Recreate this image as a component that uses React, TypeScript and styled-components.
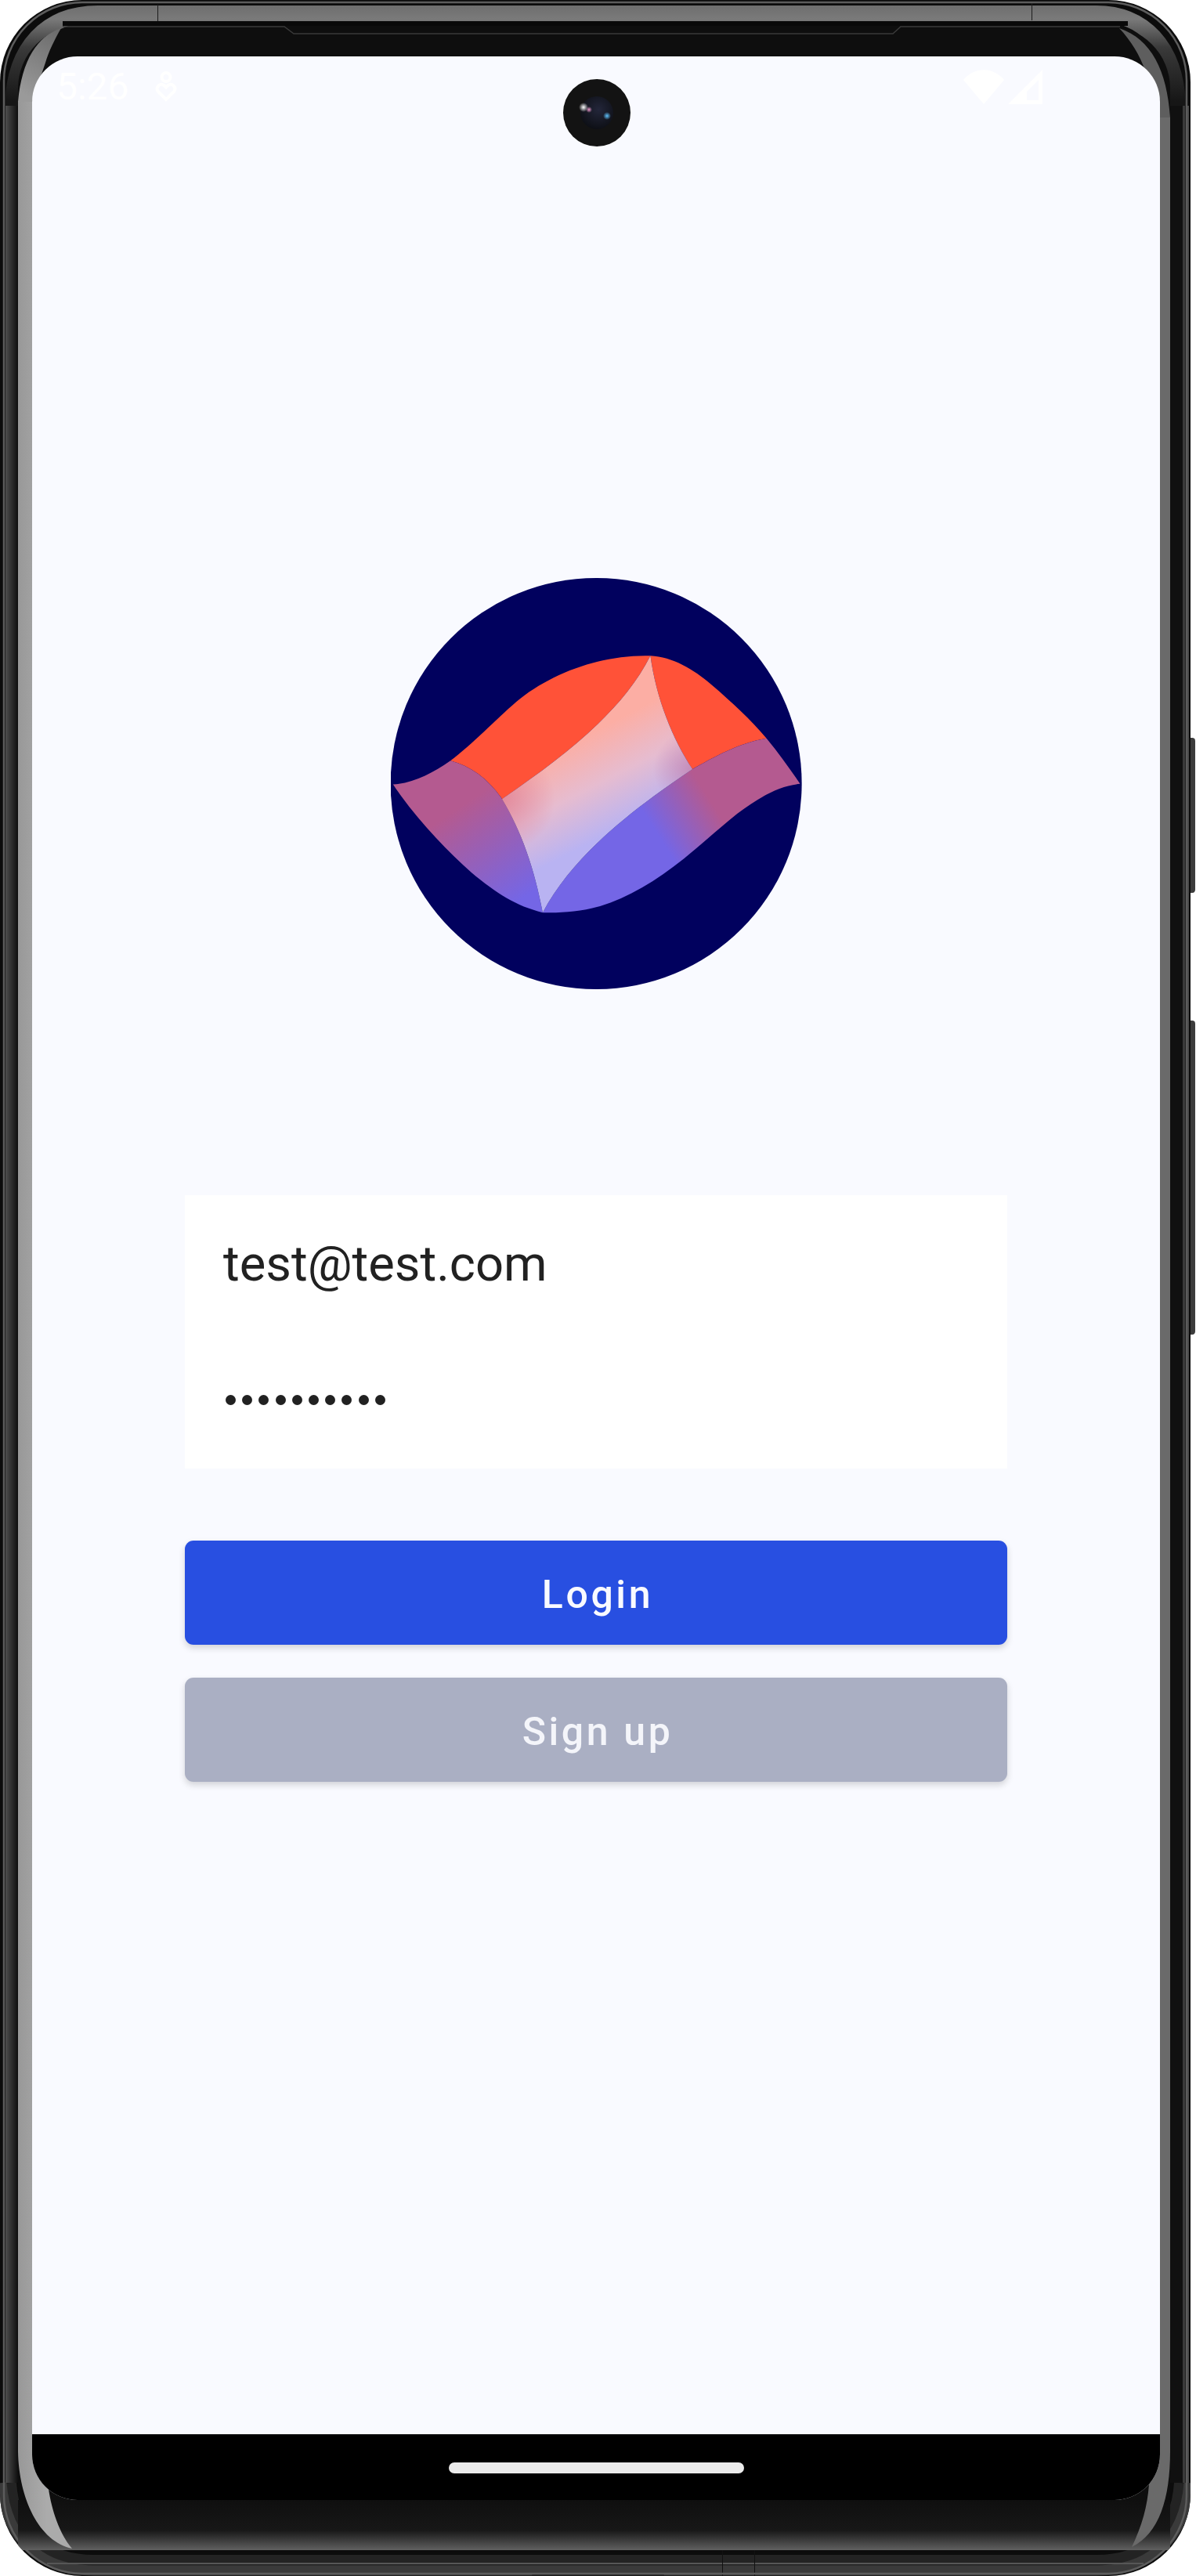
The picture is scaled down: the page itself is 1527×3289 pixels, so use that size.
import { createGlobalStyle, styled } from "styled-components";

const GlobalStyle = createGlobalStyle`
  html, body {
    margin: 0;
    padding: 0;
    background: #ffffff;
  }
`;

const Device = styled.div`
  position: relative;
  box-sizing: border-box;
  width: 1527px;
  height: 3289px;
  padding: 72px 46px 97px 41px;
  overflow: hidden;
  font-family: Roboto, "Liberation Sans", sans-serif;
`;

const FrameArt = styled.svg`
  position: absolute;
  top: 0;
  left: 0;
`;

const Screen = styled.div`
  position: relative;
  display: flex;
  flex-direction: column;
  height: 100%;
  border-radius: 58px;
  overflow: hidden;
  background: #f9faff;
`;

const StatusBar = styled.div`
  display: flex;
  align-items: center;
  justify-content: space-between;
  flex: none;
  height: 78px;
  padding: 0 150px 0 31px;
  color: #ffffff;
`;

const StatusGroup = styled.div`
  display: flex;
  align-items: center;
  gap: ${(props: { $gap: number }) => props.$gap}px;
`;

const Clock = styled.span`
  font-size: 48px;
  line-height: 56px;
`;

const Camera = styled.div`
  position: absolute;
  top: 29px;
  left: 678px;
  width: 86px;
  height: 86px;
`;

const Content = styled.main`
  display: flex;
  flex-direction: column;
  align-items: center;
  flex: 1;
  padding-top: 588px;
`;

const Logo = styled.svg`
  display: block;
  width: 525px;
  height: 525px;
`;

const Form = styled.form`
  display: flex;
  flex-direction: column;
  width: 1050px;
  margin-top: 263px;
`;

const Fields = styled.div`
  display: flex;
  flex-direction: column;
  background: #ffffff;
`;

const Field = styled.div`
  display: flex;
  align-items: center;
  box-sizing: border-box;
  height: 174.5px;
  padding: 0 49px;
  color: #212121;
  font-size: 63.3px;
`;

const Dots = styled.div`
  display: flex;
  gap: 8.2px;
  padding-left: 3px;
`;

const Dot = styled.span`
  width: 13px;
  height: 13px;
  border-radius: 50%;
  background: #212121;
`;

const Button = styled.button<{ $muted?: boolean }>`
  display: block;
  width: 100%;
  height: 133px;
  margin-top: ${(props) => (props.$muted ? "42px" : "92px")};
  padding: 4px 0 0 4px;
  border: 0;
  border-radius: 11px;
  background: ${(props) => (props.$muted ? "#aaafc3" : "#284fe1")};
  box-shadow: 0 4px 8px rgba(0, 0, 0, 0.16);
  color: ${(props) => (props.$muted ? "#f4f5fa" : "#f9faff")};
  font-family: inherit;
  font-size: 50px;
  font-weight: 500;
  letter-spacing: 3.6px;
`;

const NavBar = styled.div`
  display: flex;
  align-items: center;
  justify-content: center;
  flex: none;
  height: 84px;
  background: #000000;
`;

const NavPill = styled.div`
  width: 377px;
  height: 14px;
  margin-top: 1px;
  border-radius: 7px;
  background: #ebebeb;
`;

const PhoneFrame = () => (
  <FrameArt width="1527" height="3289" viewBox="0 0 1527 3289">
    <defs>
      <linearGradient id="band" x1="0" y1="4" x2="0" y2="130" gradientUnits="userSpaceOnUse">
        <stop offset="0" stopColor="#6c6c6c" />
        <stop offset="0.16" stopColor="#7a7a7a" />
        <stop offset="0.45" stopColor="#3a3a3a" />
        <stop offset="1" stopColor="#161616" />
      </linearGradient>
      <linearGradient id="chin" x1="0" y1="3192" x2="0" y2="3256" gradientUnits="userSpaceOnUse">
        <stop offset="0" stopColor="#0f0f0f" />
        <stop offset="0.6" stopColor="#171717" />
        <stop offset="1" stopColor="#606060" />
      </linearGradient>
      <linearGradient id="railLeft" x1="7" y1="0" x2="23" y2="0" gradientUnits="userSpaceOnUse">
        <stop offset="0" stopColor="#4e4e4e" />
        <stop offset="1" stopColor="#0e0e0e" />
      </linearGradient>
      <linearGradient id="wedgeLeft" x1="23" y1="0" x2="60" y2="0" gradientUnits="userSpaceOnUse">
        <stop offset="0" stopColor="#989898" />
        <stop offset="1" stopColor="#ababab" />
      </linearGradient>
      <linearGradient id="wedgeTop" x1="30" y1="120" x2="75" y2="40" gradientUnits="userSpaceOnUse">
        <stop offset="0" stopColor="#9a9a9a" />
        <stop offset="1" stopColor="#6c6c6c" />
      </linearGradient>
      <clipPath id="shell">
        <rect x="0" y="0" width="1520" height="3289" rx="105" />
      </clipPath>
    </defs>

    {/* side keys */}
    <rect x="1512" y="942" width="14" height="198" rx="4" fill="#3c3c3c" />
    <rect x="1512" y="1303" width="14" height="401" rx="4" fill="#3c3c3c" />

    <g clipPath="url(#shell)">
      <rect width="1520" height="3289" fill="#0c0c0c" />

      {/* metal band, top and bottom */}
      <path
        d="M16 135 C18 60 60 17 125 17 H1395 C1460 15 1502 60 1504 135"
        fill="none"
        stroke="url(#band)"
        strokeWidth="20"
      />
      <rect x="201" y="6" width="1" height="22" fill="#1c1c1c" />
      <rect x="1317" y="4" width="1" height="22" fill="#1c1c1c" />
      <path d="M14 3170 C18 3235 60 3269 120 3269 H1400 C1460 3269 1502 3235 1506 3170" fill="none" stroke="#232323" strokeWidth="14" />
      <path d="M2 3170 C8 3250 60 3282 120 3282 H1400 C1460 3282 1512 3250 1518 3170" fill="none" stroke="#3a3a3a" strokeWidth="13" />
      <path d="M60 3273 H1460" fill="none" stroke="#565656" strokeWidth="2" />
      <rect x="922" y="3256" width="1" height="33" fill="#111111" />
      <rect x="963" y="3256" width="1" height="33" fill="#111111" />
      <rect x="679" y="3287" width="169" height="2" rx="1" fill="#1e1e1e" />

      {/* side rails */}
      <rect x="7" y="135" width="16" height="3035" fill="url(#railLeft)" />
      <rect x="1494" y="135" width="16" height="3035" fill="#101010" />
      <rect x="1510" y="135" width="3" height="3035" fill="#3a3a3a" />
      <rect x="1513" y="135" width="2" height="3035" fill="#111111" />
      <rect x="1515" y="135" width="3" height="3035" fill="#4a4a4a" />
      <rect x="5" y="3" width="1510" height="3283" rx="100" fill="none" stroke="#5c5c5c" strokeWidth="2.5" />

      {/* front glass */}
      <rect x="23" y="33" width="1471" height="3223" rx="80" fill="#0e0e0e" />
      <rect x="23" y="3192" width="1471" height="64" fill="url(#chin)" />

      {/* curved glass reflections */}
      <path d="M78 36 C48 46 28 76 23 130 H41 L58 80 C62 66 70 50 78 36 Z" fill="url(#wedgeTop)" />
      <rect x="23" y="130" width="18" height="3000" fill="url(#wedgeLeft)" />
      <path
        d="M23 3130 C24 3190 50 3245 92 3254 C76 3235 66 3205 62 3178 L41 3130 Z"
        fill="url(#wedgeLeft)"
      />
      <path d="M1429 36 C1470 50 1490 90 1494 150 H1481 L1463 92 C1455 70 1444 52 1429 36 Z" fill="#5e5e5e" />
      <rect x="1481" y="150" width="13" height="2980" fill="#6a6a6a" />
      <path d="M1494 3130 C1494 3190 1480 3235 1445 3252 C1458 3225 1465 3200 1467 3172 L1481 3130 Z" fill="#6a6a6a" />

      {/* speaker ledge line */}
      <path d="M80 34 H363 L375 43 H1140 L1150 34 H1430" fill="none" stroke="#3a3a3a" strokeWidth="1.5" />
      <rect x="80" y="27" width="1360" height="6" fill="#090909" />
    </g>
  </FrameArt>
);

const NextIcon = () => (
  <svg width="28" height="40" viewBox="0 0 28 40" fill="none" stroke="#ffffff" strokeWidth="4">
    <circle cx="14" cy="7.5" r="5.5" />
    <path d="M14 36 L3.5 25.5 A5.6 5.6 0 0 1 11.5 18 L14 20.5 L16.5 18 A5.6 5.6 0 0 1 24.5 25.5 Z" />
  </svg>
);

const WifiIcon = () => (
  <svg width="52" height="44" viewBox="0 0 52 44" fill="#ffffff">
    <path d="M0 13 C14 -4 38 -4 52 13 L26 44 Z" />
  </svg>
);

const SignalIcon = () => (
  <svg width="44" height="44" viewBox="0 0 44 44" fill="#ffffff">
    <path fillRule="evenodd" d="M44 0 V44 H0 Z M39 13 L24 28 V39 H39 Z" />
  </svg>
);

const CameraLens = () => (
  <Camera>
    <svg width="86" height="86" viewBox="0 0 86 86">
      <defs>
        <radialGradient id="lens" cx="0.55" cy="0.4" r="0.7">
          <stop offset="0" stopColor="#23263a" />
          <stop offset="1" stopColor="#0a0c10" />
        </radialGradient>
        <radialGradient id="glint">
          <stop offset="0" stopColor="#ffffff" />
          <stop offset="1" stopColor="#ffffff" stopOpacity="0" />
        </radialGradient>
        <radialGradient id="glintPink">
          <stop offset="0" stopColor="#ee99cc" />
          <stop offset="1" stopColor="#ee99cc" stopOpacity="0" />
        </radialGradient>
        <radialGradient id="glintBlue">
          <stop offset="0" stopColor="#5fc4ff" />
          <stop offset="1" stopColor="#5fc4ff" stopOpacity="0" />
        </radialGradient>
      </defs>
      <circle cx="43" cy="43" r="43" fill="#131313" />
      <circle cx="43" cy="43" r="21" fill="url(#lens)" />
      <circle cx="26" cy="36" r="6" fill="url(#glint)" />
      <circle cx="33" cy="39" r="4" fill="url(#glintPink)" />
      <circle cx="56" cy="47" r="5" fill="url(#glintBlue)" />
    </svg>
  </Camera>
);

const PANEL_PATH =
  "M450 842 C670 690 880 530 980 330 C1000 480 1060 630 1130 735 C900 890 700 1050 595 1248 C565 1090 520 960 450 842 Z";

// drawn in the coordinates of a 1568 wide crop of the logo
const LogoMark = () => (
  <Logo viewBox="52 52 1470 1470">
    <defs>
      <linearGradient id="leftWing" x1="300" y1="870" x2="520" y2="1200" gradientUnits="userSpaceOnUse">
        <stop offset="0" stopColor="#b45a90" />
        <stop offset="1" stopColor="#7466e6" />
      </linearGradient>
      <linearGradient id="rightWing" x1="1000" y1="960" x2="1190" y2="840" gradientUnits="userSpaceOnUse">
        <stop offset="0" stopColor="#7466e6" />
        <stop offset="1" stopColor="#b45a90" />
      </linearGradient>
      <linearGradient id="panel" x1="700" y1="640" x2="860" y2="950" gradientUnits="userSpaceOnUse">
        <stop offset="0" stopColor="#fcaea4" />
        <stop offset="0.5" stopColor="#e6bcd0" />
        <stop offset="1" stopColor="#b9b3f2" />
      </linearGradient>
      <radialGradient id="panelLeft" cx="450" cy="842" r="190" gradientUnits="userSpaceOnUse">
        <stop offset="0" stopColor="#d8708c" stopOpacity="0.6" />
        <stop offset="1" stopColor="#d8708c" stopOpacity="0" />
      </radialGradient>
      <radialGradient id="panelRight" cx="1130" cy="735" r="140" gradientUnits="userSpaceOnUse">
        <stop offset="0" stopColor="#c0709c" stopOpacity="0.6" />
        <stop offset="1" stopColor="#c0709c" stopOpacity="0" />
      </radialGradient>
    </defs>
    <circle cx="786" cy="787" r="735" fill="#01015e" />
    <path
      d="M265 705 C340 650 430 555 500 495 C620 395 800 325 980 330 C1060 335 1130 375 1200 435 C1270 495 1340 560 1395 625 C1300 640 1210 690 1130 735 C1060 630 1000 480 980 330 C880 530 670 690 450 842 C400 770 340 725 265 705 Z"
      fill="#ff5238"
    />
    <path
      d="M60 790 C135 785 200 750 265 705 C340 725 400 770 450 842 C520 960 565 1090 595 1248 C500 1225 430 1180 340 1105 C250 1025 140 910 60 790 Z"
      fill="url(#leftWing)"
    />
    <path
      d="M595 1248 C700 1050 900 890 1130 735 C1210 690 1300 640 1395 625 C1440 680 1480 735 1515 788 C1440 795 1370 835 1290 895 C1210 960 1150 1015 1100 1055 C1000 1135 900 1195 800 1225 C730 1245 660 1250 595 1248 Z"
      fill="url(#rightWing)"
    />
    <path d={PANEL_PATH} fill="url(#panel)" />
    <path d={PANEL_PATH} fill="url(#panelLeft)" />
    <path d={PANEL_PATH} fill="url(#panelRight)" />
  </Logo>
);

export default function App() {
  return (
    <>
      <GlobalStyle />
      <Device>
        <PhoneFrame />
        <Screen>
          <StatusBar>
            <StatusGroup $gap={33}>
              <Clock>5:26</Clock>
              <NextIcon />
            </StatusGroup>
            <StatusGroup $gap={5}>
              <WifiIcon />
              <SignalIcon />
            </StatusGroup>
          </StatusBar>
          <CameraLens />
          <Content>
            <LogoMark />
            <Form>
              <Fields>
                <Field>test@test.com</Field>
                <Field>
                  <Dots>
                    {Array.from({ length: 10 }, (_, i) => (
                      <Dot key={i} />
                    ))}
                  </Dots>
                </Field>
              </Fields>
              <Button type="button">Login</Button>
              <Button type="button" $muted>
                Sign up
              </Button>
            </Form>
          </Content>
          <NavBar>
            <NavPill />
          </NavBar>
        </Screen>
      </Device>
    </>
  );
}
